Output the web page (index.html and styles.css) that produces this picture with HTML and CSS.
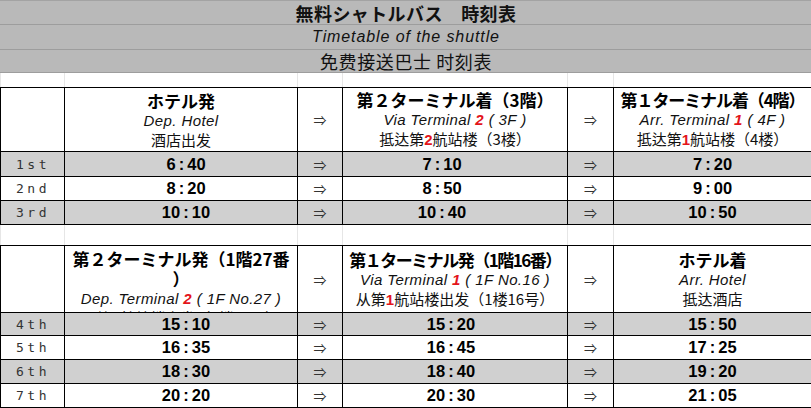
FILE: index.html
```html
<!DOCTYPE html>
<html lang="ja">
<head>
<meta charset="utf-8">
<title>無料シャトルバス 時刻表</title>
<link rel="stylesheet" href="styles.css">
</head>
<body>
<div class="sheet">
  <div class="title">
    <div class="trow t1">無料シャトルバス　時刻表</div>
    <div class="trow t2">Timetable of the shuttle</div>
    <div class="trow t3">免费接送巴士 时刻表</div>
  </div>

  <div class="gap g1"><span></span><span></span><span></span><span></span><span></span><span></span></div>

  <div class="tt t-a">
    <div class="row head h1">
      <div class="c"></div>
      <div class="c hd"><div class="ja">ホテル発</div><div class="en">Dep. Hotel</div><div class="zh">酒店出发</div></div>
      <div class="c arr">⇒</div>
      <div class="c hd"><div class="ja">第２ターミナル着（3階）</div><div class="en">Via Terminal <b class="red">2</b> ( 3F )</div><div class="zh">抵达第<b class="red">2</b>航站楼（3楼）</div></div>
      <div class="c arr">⇒</div>
      <div class="c hd"><div class="ja tight2">第１ターミナル着（4階）</div><div class="en">Arr. Terminal <b class="red">1</b> ( 4F )</div><div class="zh">抵达第<b class="red">1</b>航站楼（4楼）</div></div>
    </div>
    <div class="row odd r25">
      <div class="c ord">1st</div><div class="c time tc2">6 : 40</div><div class="c arr">⇒</div><div class="c time tc4">7 : 10</div><div class="c arr">⇒</div><div class="c time">7 : 20</div>
    </div>
    <div class="row r24">
      <div class="c ord">2nd</div><div class="c time tc2">8 : 20</div><div class="c arr">⇒</div><div class="c time tc4">8 : 50</div><div class="c arr">⇒</div><div class="c time">9 : 00</div>
    </div>
    <div class="row odd r24">
      <div class="c ord">3rd</div><div class="c time tc2">10 : 10</div><div class="c arr">⇒</div><div class="c time tc4">10 : 40</div><div class="c arr">⇒</div><div class="c time">10 : 50</div>
    </div>
  </div>

  <div class="gap g2"><span></span><span></span><span></span><span></span><span></span><span></span></div>

  <div class="tt t-b">
    <div class="row head h2">
      <div class="c"></div>
      <div class="c hd top"><div class="ja">第２ターミナル発（1階27番<br>）</div><div class="en">Dep. Terminal <b class="red">2</b> ( 1F No.27 )</div><div class="zh">从第<b class="red">2</b>航站楼出发（1楼27号）</div></div>
      <div class="c arr">⇒</div>
      <div class="c hd"><div class="ja tight">第１ターミナル発（1階16番）</div><div class="en">Via Terminal <b class="red">1</b> ( 1F No.16 )</div><div class="zh">从第<b class="red">1</b>航站楼出发（1楼16号）</div></div>
      <div class="c arr">⇒</div>
      <div class="c hd"><div class="ja">ホテル着</div><div class="en">Arr. Hotel</div><div class="zh">抵达酒店</div></div>
    </div>
    <div class="row odd r23">
      <div class="c ord">4th</div><div class="c time tc2">15 : 10</div><div class="c arr">⇒</div><div class="c time tc4">15 : 20</div><div class="c arr">⇒</div><div class="c time">15 : 50</div>
    </div>
    <div class="row r24">
      <div class="c ord">5th</div><div class="c time tc2">16 : 35</div><div class="c arr">⇒</div><div class="c time tc4">16 : 45</div><div class="c arr">⇒</div><div class="c time">17 : 25</div>
    </div>
    <div class="row odd r24">
      <div class="c ord">6th</div><div class="c time tc2">18 : 30</div><div class="c arr">⇒</div><div class="c time tc4">18 : 40</div><div class="c arr">⇒</div><div class="c time">19 : 20</div>
    </div>
    <div class="row r24">
      <div class="c ord">7th</div><div class="c time tc2">20 : 20</div><div class="c arr">⇒</div><div class="c time tc4">20 : 30</div><div class="c arr">⇒</div><div class="c time">21 : 05</div>
    </div>
  </div>
</div>
</body>
</html>
```
FILE: styles.css
```css
* { box-sizing: border-box; }
html, body { margin: 0; padding: 0; overflow: hidden; background: #fff; }
body { width: 811px; height: 408px; color: #000; font-family: "Liberation Sans", "Noto Sans CJK JP", sans-serif; }
.sheet { width: 812px; }

.title { background: #b9b9b9; border-top: 1px solid #a3a3a3; }
.trow { border-bottom: 1px solid #9d9d9d; display: flex; align-items: center; justify-content: center; color: #111; }
.t1 { height: 24px; font: bold 18px/1 "Noto Sans CJK JP", sans-serif; letter-spacing: 0.4px; }
.t2 { height: 25px; font: italic 16px/1 "Liberation Sans", sans-serif; letter-spacing: 0.9px; }
.t3 { height: 23px; font: 18px/1 "Noto Sans CJK SC", sans-serif; letter-spacing: 0.6px; }

.gap { display: grid; grid-template-columns: 64px 233px 45px 225px 46px 198px; border-left: 1px solid #e6e6e6; }
.gap span { border-right: 1px solid #e6e6e6; }
.g1 { height: 14px; }
.g2 { height: 20px; }

.tt { border-top: 1px solid #000; border-left: 1px solid #000; }
.row { display: grid; grid-template-columns: 64px 233px 45px 225px 46px 198px; }
.odd { background: #d0d0d0; }
.h1 { height: 64px; }
.h2 { height: 67px; }
.r25 { height: 25px; }
.r24 { height: 24px; }
.r23 { height: 23px; }

.c { border-right: 1px solid #000; border-bottom: 1px solid #000; display: flex; align-items: center; justify-content: center; overflow: hidden; }
.hd { flex-direction: column; text-align: center; }
.hd.top { justify-content: flex-start; padding-top: 3px; }
.ja { font: bold 17px/20px "Noto Sans CJK JP", sans-serif; white-space: nowrap; }
.ja.tight { letter-spacing: -1.5px; }
.ja.tight2 { letter-spacing: -1.1px; }
.en { font: italic 15px/19px "Liberation Sans", sans-serif; letter-spacing: 0.4px; color: #111; white-space: nowrap; }
.zh { font: 15px/19px "Noto Sans CJK SC", sans-serif; color: #111; white-space: nowrap; }
.red { color: #e3141b; font-weight: bold; }
.zh .red { font-family: "Liberation Sans", sans-serif; }

.time { font: bold 16.5px/1 "Liberation Sans", sans-serif; word-spacing: -1.5px; }
.tc2 { padding-left: 10px; }
.t-a .tc4 { padding-right: 26px; }
.t-b .tc4 { padding-right: 8px; }
.arr { font: 13px/1 "Noto Sans CJK JP", sans-serif; color: #333; }
.ord { justify-content: flex-start; padding-left: 15px; font: 13px/1 "DejaVu Sans Mono", monospace; letter-spacing: 3.5px; color: #333; }
```
